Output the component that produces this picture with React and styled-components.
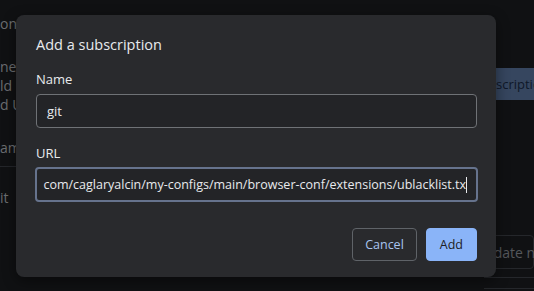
import React from "react";
import styled, { createGlobalStyle } from "styled-components";

const Global = createGlobalStyle`
  html, body {
    margin: 0;
    padding: 0;
    background: #101113;
    font-family: "Open Sans", "Noto Sans", sans-serif;
    overflow: hidden;
  }
`;

const Page = styled.div`
  position: relative;
  width: 534px;
  height: 291px;
  display: flex;
  justify-content: space-between;
  overflow: hidden;
  background: #101113;
`;

const LeftColumn = styled.div`
  width: 60px;
  display: flex;
  flex-direction: column;
  color: #6b6d70;
  font-size: 14px;
  white-space: nowrap;
`;

const Fragment = styled.div`
  height: ${(p) => p.h}px;
  margin-top: ${(p) => p.mt || 0}px;
  display: flex;
  align-items: center;
  border-bottom: ${(p) => (p.line ? "1px solid #24262a" : "none")};
`;

const RightColumn = styled.div`
  width: 50px;
  display: flex;
  flex-direction: column;
  white-space: nowrap;
  overflow: hidden;
`;

const DimButton = styled.div`
  margin-top: 68px;
  height: 32px;
  display: flex;
  align-items: center;
  padding-left: 12px;
  background: #36465f;
  color: #0f1829;
  font-size: 13px;
`;

const DimOutline = styled.div`
  margin-top: 135px;
  height: 34px;
  box-sizing: border-box;
  display: flex;
  align-items: center;
  color: #55575b;
  font-size: 14px;
  border: 1px solid #25272b;
  border-radius: 4px;
  text-indent: -10px;
`;

const Divider = styled.div`
  margin-top: ${(p) => p.mt}px;
  height: 1px;
  background: #25272b;
`;

const Dialog = styled.div`
  position: absolute;
  left: 16px;
  top: 15px;
  width: 480px;
  box-sizing: border-box;
  padding: 19px 19px 16px 20px;
  background: #292a2d;
  border-radius: 8px;
  box-shadow: 0 4px 14px rgba(0, 0, 0, 0.45);
  display: flex;
  flex-direction: column;
`;

const Title = styled.h2`
  margin: 0 0 14px;
  font-size: 14.5px;
  line-height: 22px;
  font-weight: 400;
  color: #e8eaed;
`;

const Label = styled.label`
  font-size: 13px;
  line-height: 18px;
  color: #e8eaed;
  margin-bottom: ${(p) => p.gap}px;
`;

const Field = styled.div`
  height: ${(p) => (p.focused ? 35 : 34)}px;
  box-sizing: border-box;
  border-radius: 4px;
  background: #232427;
  border: ${(p) => (p.focused ? "2px solid #66738d" : "1px solid #6f7276")};
  padding: 0 ${(p) => (p.focused ? 9 : 10)}px;
  margin: 0 ${(p) => (p.focused ? -1 : 0)}px ${(p) => p.gap}px;
  display: flex;
  align-items: center;
  justify-content: ${(p) => (p.focused ? "flex-end" : "flex-start")};
  overflow: hidden;
  white-space: nowrap;
  font-size: ${(p) => (p.focused ? 12.5 : 13)}px;
  color: #e8eaed;
`;

const Caret = styled.span`
  display: inline-block;
  width: 1px;
  height: 16px;
  background: #e8eaed;
  flex: none;
`;

const Actions = styled.div`
  display: flex;
  justify-content: flex-end;
  gap: 9px;
`;

const Button = styled.button`
  height: 33px;
  box-sizing: border-box;
  padding: 0 ${(p) => (p.primary ? 13 : 12)}px;
  border-radius: 4px;
  font-family: inherit;
  font-size: 12.5px;
  border: 1px solid ${(p) => (p.primary ? "#8ab4f8" : "#5f6368")};
  background: ${(p) => (p.primary ? "#8ab4f8" : "transparent")};
  color: ${(p) => (p.primary ? "#202124" : "#a8c4ef")};
`;

export default function App() {
  return (
    <>
      <Global />
      <Page>
        <LeftColumn>
          <Fragment h={46}>on</Fragment>
          <Fragment h={20} mt={10}>ne t</Fragment>
          <Fragment h={19}>ld</Fragment>
          <Fragment h={19}>d U</Fragment>
          <Fragment h={37} mt={15} line>am</Fragment>
          <Fragment h={60}>it</Fragment>
        </LeftColumn>
        <RightColumn>
          <DimButton>scription</DimButton>
          <DimOutline>Update now</DimOutline>
          <Divider mt={8} />
          <Divider mt={10} />
        </RightColumn>
        <Dialog>
          <Title>Add a subscription</Title>
          <Label gap={6}>Name</Label>
          <Field gap={16}>git</Field>
          <Label gap={5}>URL</Label>
          <Field focused gap={26}>
            com/caglaryalcin/my-configs/main/browser-conf/extensions/ublacklist.tx
            <Caret />
          </Field>
          <Actions>
            <Button>Cancel</Button>
            <Button primary>Add</Button>
          </Actions>
        </Dialog>
      </Page>
    </>
  );
}
